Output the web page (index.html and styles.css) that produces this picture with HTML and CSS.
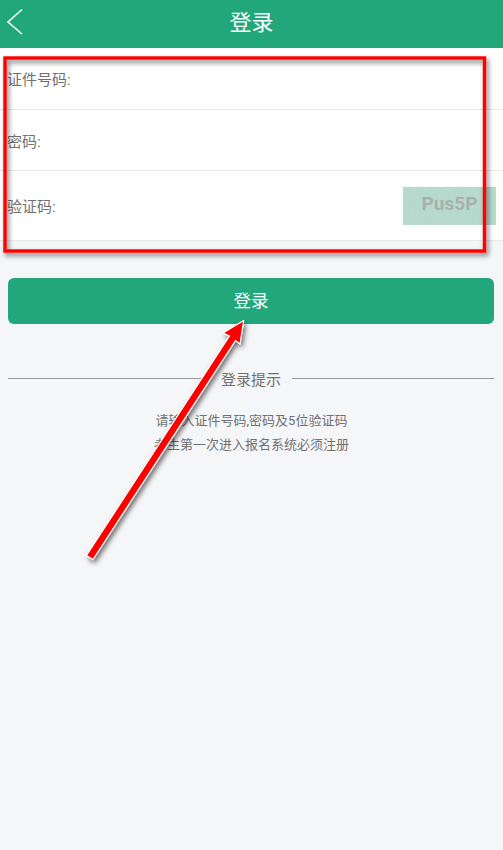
FILE: index.html
```html
<!DOCTYPE html>
<html lang="zh">
<head>
<meta charset="utf-8">
<title>登录</title>
<link rel="stylesheet" href="styles.css">
</head>
<body>
<header class="topbar">
  <svg class="back" width="26" height="40" viewBox="0 0 26 40"><path d="M22 9.500 L8 22 L22 34" fill="none" stroke="#fff" stroke-width="1.600"/></svg>
  <h1 class="title">登录</h1>
</header>
<form class="form">
  <div class="row row-id"><span class="label">证件号码:</span></div>
  <div class="row row-pw"><span class="label">密码:</span></div>
  <div class="row row-code"><span class="label">验证码:</span><span class="captcha">Pus5P</span></div>
</form>
<div class="submit">登录</div>
<div class="divider"><span class="line line-left"></span><span class="divider-text">登录提示</span><span class="line"></span></div>
<div class="hints">
  <p>请输入证件号码,密码及5位验证码</p>
  <p>考生第一次进入报名系统必须注册</p>
</div>
<svg class="markup" width="503" height="850" viewBox="0 0 503 850">
  <defs>
    <filter id="shade" x="-10%" y="-10%" width="120%" height="120%">
      <feDropShadow dx="2" dy="3" stdDeviation="2.500" flood-color="#000" flood-opacity="0.550"/>
    </filter>
    <filter id="noise" x="0" y="0" width="100%" height="100%">
      <feTurbulence type="fractalNoise" baseFrequency="0.900" numOctaves="2" seed="4"/>
      <feColorMatrix type="matrix" values="0 0 0 0 0.500  0 0 0 0 0.560  0 0 0 0 0.530  1.600 0 0 0 -0.500"/>
    </filter>
  </defs>
  <rect x="403" y="186" width="93" height="38" filter="url(#noise)" opacity="0.400"/>
  <rect x="5" y="58" width="479.500" height="193" fill="none" stroke="#ff0000" stroke-width="3.400" filter="url(#shade)"/>
  <path d="M243.700 320.500 L240 344 L235.500 340.500 L93 559.500 L86.500 555.500 L229.500 336 L223 333 Z" fill="#ff0000" stroke="#fff" stroke-width="1.200" stroke-linejoin="round" filter="url(#shade)"/>
</svg>
</body>
</html>
```

FILE: styles.css
```css
html, body {
  margin: 0;
  padding: 0;
}
body {
  width: 503px;
  height: 850px;
  overflow: hidden;
  position: relative;
  background: #f5f6f8;
  font-family: "Roboto", "Noto Sans CJK SC", sans-serif;
  color: #707070;
}
.topbar {
  height: 48px;
  background: #22a77a;
  display: flex;
  align-items: center;
  justify-content: center;
  position: relative;
}
.back {
  position: absolute;
  left: 0;
  top: 0;
}
.title {
  margin: 0 0 3px;
  font-size: 22px;
  font-weight: 400;
  color: #fff;
  line-height: 44px;
}
.form {
  background: #fff;
  display: flex;
  flex-direction: column;
}
.row {
  display: flex;
  align-items: center;
  justify-content: space-between;
  padding-left: 7px;
  border-bottom: 1px solid #e8e9eb;
  font-size: 15px;
  color: #707070;
}
.row-id {
  height: 61px;
}
.row-pw {
  height: 61px;
  box-sizing: border-box;
}
.row-code {
  height: 69px;
  padding-right: 7px;
}
.captcha {
  width: 93px;
  height: 38px;
  background: #b6dcd0;
  color: #a5aeab;
  font-family: "Roboto", sans-serif;
  font-weight: 700;
  font-size: 19px;
  line-height: 34px;
  text-align: center;
}
.submit {
  margin: 37px 9px 0 8px;
  height: 46px;
  border-radius: 6px;
  background: #22a77a;
  color: #fff;
  font-size: 17.500px;
  line-height: 46px;
  text-align: center;
}
.divider {
  margin: 42px 9px 0 8px;
  display: flex;
  align-items: center;
  height: 24px;
}
.line {
  flex: 1;
  height: 1px;
  background: #999;
}
.line-left {
  flex: 0 0 196px;
}
.divider-text {
  padding: 0 11px 0 17px;
  font-size: 15px;
  color: #707070;
}
.hints {
  margin-top: 19px;
  text-align: center;
  font-size: 13px;
  line-height: 24px;
  color: #707070;
}
.hints p {
  margin: 0;
}
.markup {
  position: absolute;
  left: 0;
  top: 0;
  pointer-events: none;
}
```
